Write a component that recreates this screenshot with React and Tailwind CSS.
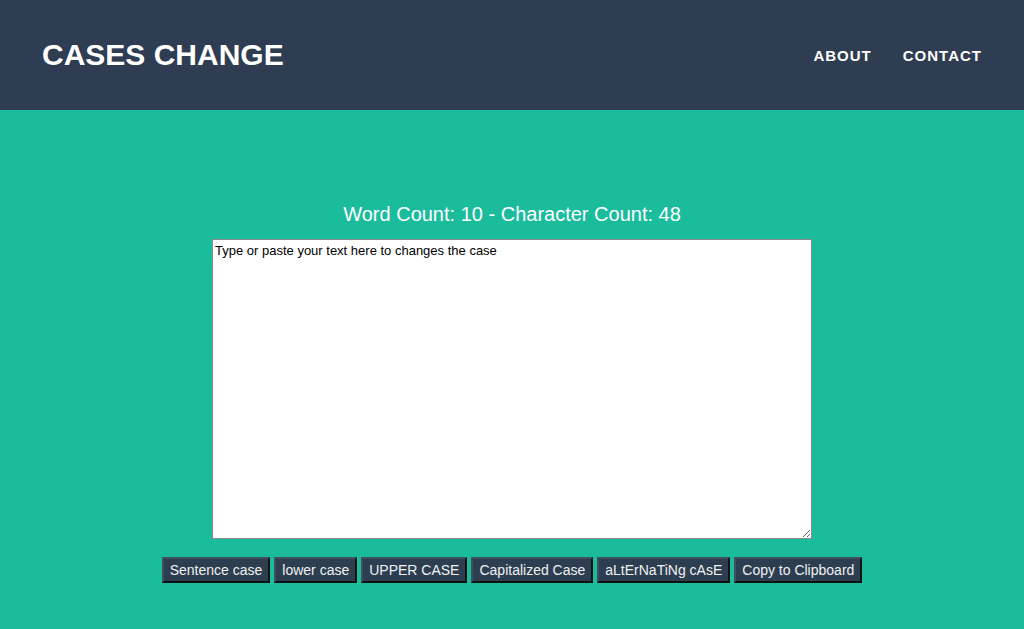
import React, { useState } from "react";

const cases = [
  "Sentence case",
  "lower case",
  "UPPER CASE",
  "Capitalized Case",
  "aLtErNaTiNg cAsE",
  "Copy to Clipboard",
];

const App = () => {
  const [text, setText] = useState("Type or paste your text here to changes the case");
  const words = text.trim() ? text.trim().split(/\s+/).length : 0;

  return (
    <div className="min-h-[629px] bg-[#1abc9c] font-['Liberation_Sans',Arial,sans-serif]">
      <header className="h-[110px] bg-[#2e3d51] flex items-center justify-between pl-[42px] pr-[42px]">
        <h1 className="text-[30px] font-bold text-white leading-none">CASES CHANGE</h1>
        <nav className="flex gap-[31px] pt-[2px] text-[15px] font-bold text-white tracking-[1px]">
          <a href="#">ABOUT</a>
          <a href="#">CONTACT</a>
        </nav>
      </header>

      <main className="flex flex-col items-center pt-[92px]">
        <p className="text-[20px] text-white leading-[24px] mb-[13px]">
          Word Count: {words} - Character Count: {text.length}
        </p>
        <textarea
          value={text}
          onChange={(e) => setText(e.target.value)}
          className="w-[600px] h-[300px] bg-white border border-[#8c8c8c] text-[13px] leading-[15px] text-black px-[2px] pt-[3px] pb-[2px] outline-none font-['Liberation_Sans',Arial,sans-serif]"
        />
        <div className="flex gap-[4px] mt-[18px]">
          {cases.map((label) => (
            <button
              key={label}
              className="h-[26px] px-[6px] bg-[#2c3e50] text-[#f0f0f0] text-[14px] border-2 border-t-[#3f4f60] border-l-[#3f4f60] border-r-[#111] border-b-[#111]"
            >
              {label}
            </button>
          ))}
        </div>
      </main>
    </div>
  );
};

export default App;
